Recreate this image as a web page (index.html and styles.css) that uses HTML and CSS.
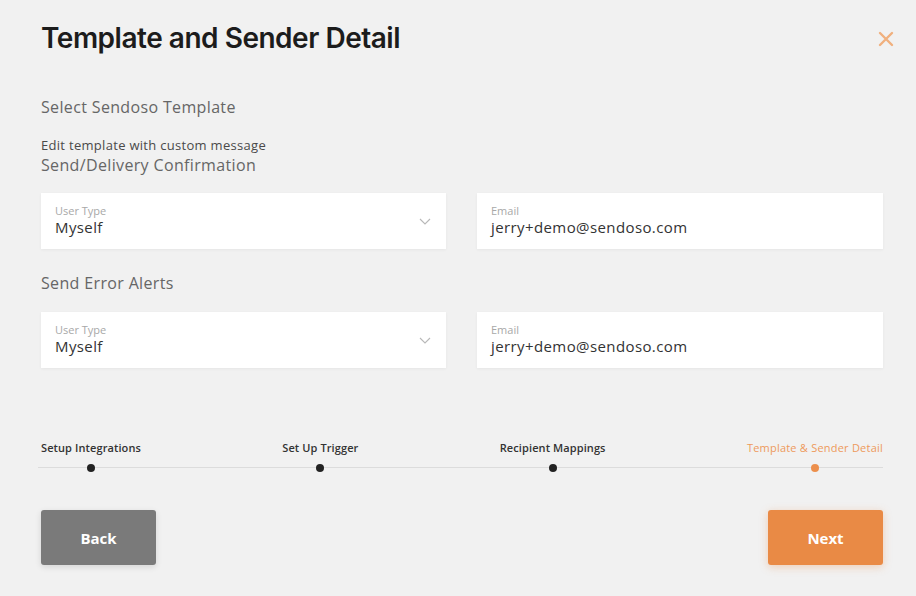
FILE: index.html
```html
<!DOCTYPE html>
<html>
<head>
<meta charset="utf-8">
<link rel="stylesheet" href="styles.css">
</head>
<body>
<div class="modal">
  <header class="head">
    <h1 class="title">Template and Sender Detail</h1>
    <button class="close" aria-label="Close">
      <svg width="16" height="16" viewBox="0 0 16 16"><path d="M2 2L14 14M14 2L2 14" stroke="#f0b07e" stroke-width="2.4" stroke-linecap="round"/></svg>
    </button>
  </header>

  <h2 class="section first">Select Sendoso Template</h2>
  <p class="hint">Edit template with custom message</p>
  <h2 class="section tight">Send/Delivery Confirmation</h2>
  <div class="row">
    <div class="field">
      <div class="f-text">
        <span class="f-label">User Type</span>
        <span class="f-value">Myself</span>
      </div>
      <svg class="chev" width="12" height="7" viewBox="0 0 12 7"><path d="M1 1L6 6L11 1" fill="none" stroke="#b8b8b8" stroke-width="1.1"/></svg>
    </div>
    <div class="field">
      <div class="f-text">
        <span class="f-label">Email</span>
        <span class="f-value">jerry+demo@sendoso.com</span>
      </div>
    </div>
  </div>

  <h2 class="section mid">Send Error Alerts</h2>
  <div class="row">
    <div class="field">
      <div class="f-text">
        <span class="f-label">User Type</span>
        <span class="f-value">Myself</span>
      </div>
      <svg class="chev" width="12" height="7" viewBox="0 0 12 7"><path d="M1 1L6 6L11 1" fill="none" stroke="#b8b8b8" stroke-width="1.1"/></svg>
    </div>
    <div class="field">
      <div class="f-text">
        <span class="f-label">Email</span>
        <span class="f-value">jerry+demo@sendoso.com</span>
      </div>
    </div>
  </div>

  <div class="stepper">
    <div class="step"><span class="s-label">Setup Integrations</span><span class="dot"></span></div>
    <div class="step"><span class="s-label">Set Up Trigger</span><span class="dot"></span></div>
    <div class="step"><span class="s-label">Recipient Mappings</span><span class="dot"></span></div>
    <div class="step active"><span class="s-label">Template &amp; Sender Detail</span><span class="dot"></span></div>
  </div>

  <div class="actions">
    <button class="btn back">Back</button>
    <button class="btn next">Next</button>
  </div>
</div>
</body>
</html>
```

FILE: styles.css
```css
html, body {
  margin: 0;
  padding: 0;
  background: #f1f1f1;
}
body {
  font-family: "Open Sans", "Noto Sans", sans-serif;
  color: #333;
}
.modal {
  width: 916px;
  height: 596px;
  box-sizing: border-box;
  padding: 18px 33px 0 41px;
}
.head {
  display: flex;
  justify-content: space-between;
  align-items: center;
  height: 40px;
}
.title {
  margin: 0;
  font-family: Inter, "Liberation Sans", sans-serif;
  font-weight: 600;
  font-size: 28px;
  letter-spacing: -0.48px;
  color: #1c1c1c;
}
.close {
  border: 0;
  background: none;
  padding: 0;
  margin-right: -11px;
  margin-top: 2px;
  display: flex;
}
.section {
  margin: 0;
  font-weight: 400;
  font-size: 16px;
  color: #666;
  line-height: 20px;
  letter-spacing: 0.35px;
}
.section.first { margin-top: 39px; }
.section.tight { margin-top: 2px; }
.section.mid { margin-top: 24px; }
.hint {
  margin: 20px 0 0;
  font-size: 13px;
  line-height: 16px;
  color: #4a4a4a;
  letter-spacing: 0.3px;
}
.row {
  display: grid;
  grid-template-columns: 405px 406px;
  column-gap: 31px;
  margin-top: 18px;
  width: 842px;
}
.mid + .row { margin-top: 19px; }
.field {
  height: 56px;
  background: #fff;
  box-shadow: 0 1px 3px rgba(0,0,0,0.05);
  display: flex;
  align-items: center;
  justify-content: space-between;
  padding: 0 14px;
  box-sizing: border-box;
}
.f-text {
  display: flex;
  flex-direction: column;
  margin-top: -2px;
}
.f-label {
  font-size: 11px;
  line-height: 14px;
  color: #a8a8a8;
}
.f-value {
  font-size: 15px;
  line-height: 19px;
  color: #333;
  letter-spacing: 0.4px;
}
.chev { margin-right: 1px; }
.stepper {
  position: relative;
  display: flex;
  justify-content: space-between;
  width: 842px;
  margin-top: 73px;
}
.stepper::before {
  content: "";
  position: absolute;
  left: -3px;
  right: 0;
  top: 26px;
  height: 1px;
  background: #dcdcdc;
}
.step {
  position: relative;
  display: flex;
  flex-direction: column;
  align-items: center;
  gap: 9px;
}
.s-label {
  font-size: 11px;
  line-height: 14px;
  font-weight: 600;
  color: #333;
  letter-spacing: 0.1px;
}
.dot {
  width: 8px;
  height: 8px;
  border-radius: 50%;
  background: #222;
}
.step.active .s-label { color: #ee9a5c; font-weight: 400; letter-spacing: 0.22px; }
.step.active .dot { background: #ec8f4c; }
.actions {
  display: flex;
  justify-content: space-between;
  width: 842px;
  margin-top: 38px;
}
.btn {
  width: 115px;
  height: 55px;
  border: 0;
  border-radius: 3px;
  color: #fff;
  font-family: "Open Sans", sans-serif;
  font-weight: 700;
  font-size: 15px;
  box-shadow: 0 2px 6px rgba(0,0,0,0.12);
}
.back { background: #7a7a7a; }
.next {
  background: #e98a45;
  box-shadow: 0 2px 8px rgba(233,138,69,0.35);
}
```
